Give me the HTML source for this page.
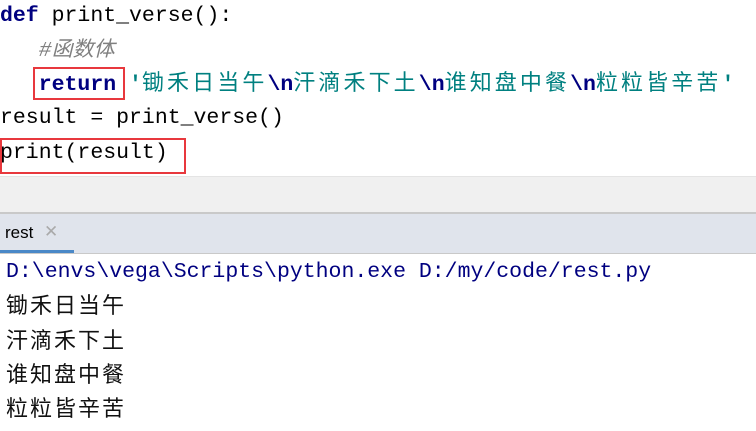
<!DOCTYPE html>
<html><head><meta charset="utf-8"><style>
body{margin:0;width:756px;height:431px;background:#fff;overflow:hidden;position:relative;font-family:"Liberation Mono","Noto Sans CJK SC",monospace;}
.l{position:absolute;left:0;font-size:21.5px;white-space:pre;line-height:30px;color:#000;}
.k{color:#000080;font-weight:bold}
.s{color:#008080;font-weight:bold}
.cj{font-family:"Noto Sans CJK SC",sans-serif;font-weight:normal;letter-spacing:3.1px;font-size:22px}
.c{color:#808080;font-style:italic}
.box{position:absolute;border:2px solid #e8383d;box-sizing:border-box}
.o{position:absolute;left:6px;font-size:21.5px;line-height:30px;white-space:pre;color:#000}
.oc{font-family:"Noto Sans CJK SC",sans-serif;font-size:22px;letter-spacing:2px;color:#111}
</style></head><body>
<div class="l" style="top:1px"><span class="k">def</span> print_verse():</div>
<div class="l c" style="top:33px">   #<span style="font-family:'Noto Sans CJK SC',sans-serif;font-size:21px">函数体</span></div>
<div class="l" style="top:66px">   <span class="k">return</span> <span class="s">'<span class="cj">锄禾日当午</span><span class="k">\n</span><span class="cj">汗滴禾下土</span><span class="k">\n</span><span class="cj">谁知盘中餐</span><span class="k">\n</span><span class="cj">粒粒皆辛苦</span>'</span></div>
<div class="l" style="top:103px">result = print_verse()</div>
<div class="l" style="top:138px">print(result)</div>
<div class="box" style="left:33px;top:67px;width:92px;height:33px"></div>
<div class="box" style="left:0;top:138px;width:186px;height:36px"></div>
<div style="position:absolute;left:0;top:176px;width:756px;height:37px;background:#f0f0f0;border-top:1px solid #e4e4e4"></div>
<div style="position:absolute;left:0;top:212px;width:756px;height:2px;background:#c9c9c9"></div>
<div style="position:absolute;left:0;top:214px;width:756px;height:39px;background:#e0e4ec;border-bottom:1px solid #c9c9c9"></div>
<div style="position:absolute;left:0;top:250px;width:74px;height:3px;background:#4a88c7"></div>
<div style="position:absolute;left:5px;top:223px;font-family:'Liberation Sans',sans-serif;font-size:17px;color:#000">rest</div>
<div style="position:absolute;left:44px;top:222px;font-family:'Liberation Sans',sans-serif;font-size:17px;color:#aaa">✕</div>
<div class="o" style="top:257px;color:#000080">D:\envs\vega\Scripts\python.exe D:/my/code/rest.py</div>
<div class="o oc" style="top:289px">锄禾日当午</div>
<div class="o oc" style="top:324px">汗滴禾下土</div>
<div class="o oc" style="top:358px">谁知盘中餐</div>
<div class="o oc" style="top:392px">粒粒皆辛苦</div>
</body></html>
